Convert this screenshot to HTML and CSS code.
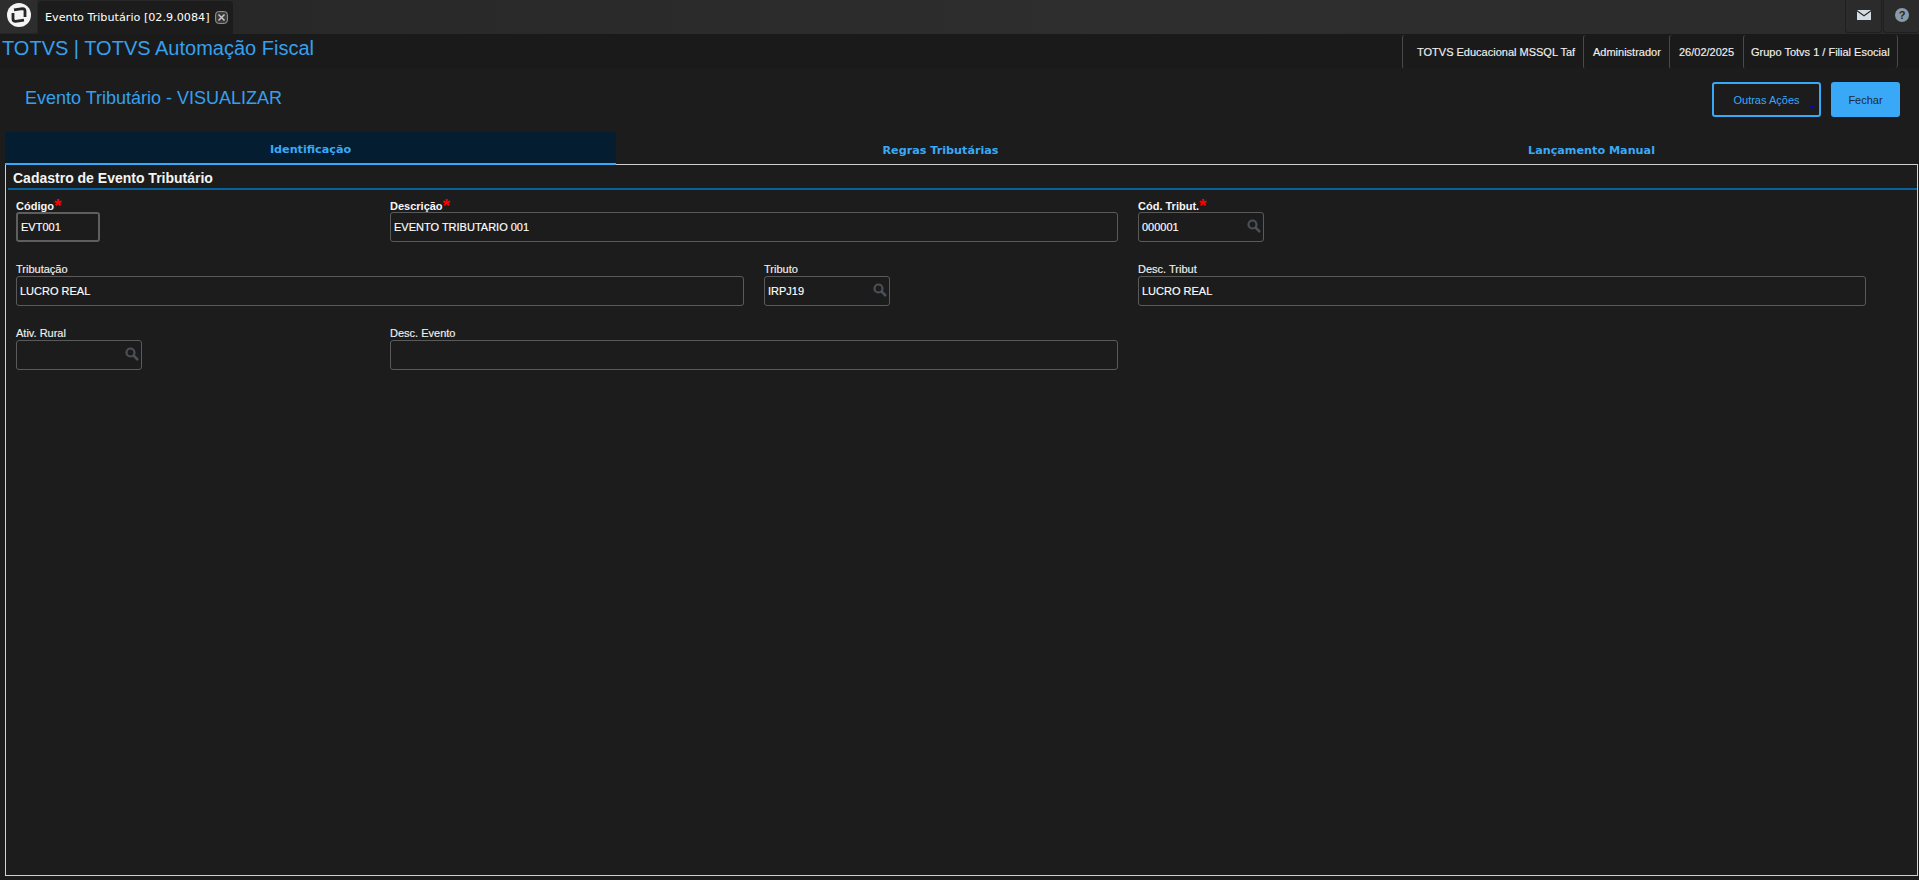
FILE: index.html
```html
<!DOCTYPE html>
<html lang="pt-BR">
<head>
<meta charset="utf-8">
<title>Evento Tributário</title>
<link rel="stylesheet" href="styles.css">
</head>
<body>
<div class="topbar">
  <div class="logo-cell">
    <svg class="logo" viewBox="0 0 24 24" width="24" height="24"><circle cx="12" cy="12" r="12" fill="#f4f4f4"/><path d="M7 6.800 L15.500 5.600 Q18 5.600 18 8 V14" fill="none" stroke="#262626" stroke-width="2.800"/><path d="M17 17.200 L8.500 18.400 Q6 18.400 6 16 V10" fill="none" stroke="#262626" stroke-width="2.800"/></svg>
  </div>
  <div class="doc-tab">
    <span class="doc-tab-title">Evento Tributário [02.9.0084]</span>
    <svg class="doc-tab-close" viewBox="0 0 13 13" width="13" height="13"><rect x="0.600" y="0.600" width="11.800" height="11.800" rx="3" fill="#3a3a3a" stroke="#9a9a9a"/><path d="M3.500 3.500 L9.500 9.500 M9.500 3.500 L3.500 9.500" stroke="#c8c8c8" stroke-width="1.500"/></svg>
  </div>
  <div class="top-spacer"></div>
  <div class="icon-cell">
    <svg viewBox="0 0 14 10" width="14" height="10"><path d="M0 0 H14 L7 5 Z M0 1.500 L7 6.500 L14 1.500 V10 H0 Z" fill="#d4dde3"/></svg>
  </div>
  <div class="icon-cell">
    <svg viewBox="0 0 14 14" width="14" height="14"><circle cx="7" cy="7" r="7" fill="#8a9ba8"/><text class="help-mark" x="7" y="11" text-anchor="middle">?</text></svg>
  </div>
</div>

<header class="appbar">
  <div class="app-title">TOTVS | TOTVS Automação Fiscal</div>
  <ul class="status">
    <li class="status-item status-first">TOTVS Educacional MSSQL Taf</li>
    <li class="status-item status-user">Administrador</li>
    <li class="status-item status-date">26/02/2025</li>
    <li class="status-item status-branch">Grupo Totvs 1 / Filial Esocial</li>
  </ul>
</header>

<main class="page">
  <div class="page-head">
    <h1 class="page-title">Evento Tributário - VISUALIZAR</h1>
    <div class="actions">
      <button class="btn btn-outline">Outras Ações<span class="caret"></span></button>
      <button class="btn btn-solid">Fechar</button>
    </div>
  </div>

  <nav class="tabs">
    <div class="tab tab-active">Identificação</div>
    <div class="tab">Regras Tributárias</div>
    <div class="tab">Lançamento Manual</div>
  </nav>

  <section class="panel">
    <h2 class="section-title">Cadastro de Evento Tributário</h2>
    <div class="form">
      <div class="field"><label class="label label-strong">Código<span class="req">*</span></label><div class="input input-focus w-code">EVT001</div></div>
      <div class="field span-2"><label class="label label-strong">Descrição<span class="req">*</span></label><div class="input">EVENTO TRIBUTARIO 001</div></div>
      <div class="field"><label class="label label-strong">Cód. Tribut.<span class="req">*</span></label><div class="input w-look">000001<svg class="lens" viewBox="0 0 14 14"><circle cx="5.500" cy="5.500" r="4" fill="none" stroke="#4a5058" stroke-width="2.200"/><path d="M8.500 8.500 L13 13" stroke="#4a5058" stroke-width="2.500"/></svg></div></div>
      <div class="field field-end"></div>

      <div class="field span-2"><label class="label">Tributação</label><div class="input">LUCRO REAL</div></div>
      <div class="field"><label class="label">Tributo</label><div class="input w-look">IRPJ19<svg class="lens" viewBox="0 0 14 14"><circle cx="5.500" cy="5.500" r="4" fill="none" stroke="#4a5058" stroke-width="2.200"/><path d="M8.500 8.500 L13 13" stroke="#4a5058" stroke-width="2.500"/></svg></div></div>
      <div class="field span-2"><label class="label">Desc. Tribut</label><div class="input">LUCRO REAL</div></div>

      <div class="field"><label class="label">Ativ. Rural</label><div class="input w-look"><svg class="lens" viewBox="0 0 14 14"><circle cx="5.500" cy="5.500" r="4" fill="none" stroke="#4a5058" stroke-width="2.200"/><path d="M8.500 8.500 L13 13" stroke="#4a5058" stroke-width="2.500"/></svg></div></div>
      <div class="field span-2"><label class="label">Desc. Evento</label><div class="input"></div></div>
    </div>
  </section>
</main>
</body>
</html>
```
FILE: styles.css
```css
* { box-sizing: border-box; }
html, body { margin: 0; padding: 0; height: 100%; }
body {
  width: 1919px;
  height: 880px;
  overflow: hidden;
  background: #1c1c1c;
  color: #f0f0f0;
  font-family: "Liberation Sans", Arial, sans-serif;
  display: flex;
  flex-direction: column;
}

.topbar {
  height: 34px;
  flex: none;
  display: flex;
  background: linear-gradient(90deg, #262626, #2e2e2e 60%, #2b2b2b);
}
.logo-cell {
  width: 37px;
  height: 33px;
  display: flex;
  align-items: center;
  justify-content: center;
  padding-bottom: 3px;
  background: #2d2d2d;
  border-radius: 0 0 4px 0;
}
.doc-tab {
  width: 195px;
  height: 33px;
  display: flex;
  align-items: center;
  padding-left: 7px;
  gap: 5px;
  background: #1c1c1c;
  border-radius: 4px 4px 0 0;
  margin: 1px 0 0 1px;
}
.doc-tab-title {
  font-family: "DejaVu Sans", sans-serif;
  font-size: 11.200px;
  color: #fff;
  white-space: nowrap;
}
.top-spacer { flex: 1; }
.icon-cell {
  width: 37px;
  height: 33px;
  display: flex;
  align-items: center;
  justify-content: center;
  padding-bottom: 3px;
  border: 1px solid #1f1f1f;
  border-top: 0;
  border-radius: 0 0 3px 3px;
}
.icon-cell + .icon-cell { width: 36px; margin-left: 1px; border-right: 0; }
.help-mark { font: bold 11px "Liberation Sans", sans-serif; fill: #262626; }

.appbar {
  height: 34px;
  flex: none;
  display: flex;
  justify-content: space-between;
  background: #1a1a1a;
  border-top: 1px solid #1a1a1a;
}
.app-title {
  font-size: 20px;
  line-height: 27px;
  color: #35a0ee;
  padding-left: 2px;
}
.status {
  display: flex;
  list-style: none;
  margin: 0 21px 0 0;
  padding: 0;
  border-right: 1px solid #4a4a4a;
  border-radius: 3px;
}
.status-item {
  height: 34px;
  line-height: 35px;
  font-size: 11px;
  color: #f0f0f0;
  -webkit-text-stroke: 0.15px #f0f0f0;
  border-left: 1px solid #4a4a4a;
  border-radius: 3px 0 0 3px;
  white-space: nowrap;
}
.status-first { width: 181px; padding-left: 14px; }
.status-user { width: 86px; padding-left: 9px; }
.status-date { width: 74px; padding-left: 9px; }
.status-branch { width: 154px; padding-left: 7px; }

.page {
  flex: 1;
  display: flex;
  flex-direction: column;
  padding: 0 1px 4px 5px;
  min-height: 0;
  background: #1c1c1c;
}
.page-head {
  height: 64px;
  flex: none;
  display: flex;
  align-items: flex-start;
  justify-content: space-between;
  padding: 14px 18px 0 20px;
}
.page-title {
  margin: 6px 0 0;
  font-size: 18px;
  font-weight: 400;
  line-height: 20px;
  color: #35a0ee;
}
.actions { display: flex; gap: 10px; }
.btn {
  height: 35px;
  font-family: "Liberation Sans", sans-serif;
  font-size: 11px;
  border-radius: 3px;
  padding: 0;
  position: relative;
}
.btn-outline {
  width: 109px;
  background: transparent;
  border: 2px solid #39a9f7;
  color: #39a9f7;
}
.btn-solid {
  width: 69px;
  background: #39a9f7;
  border: 0;
  color: #1e2a33;
}
.caret {
  position: absolute;
  right: 3px;
  bottom: 6px;
  border-left: 4px solid transparent;
  border-right: 4px solid transparent;
  border-top: 4px solid #0a0ab0;
}

.tabs {
  position: relative;
  z-index: 1;
  height: 33px;
  flex: none;
  display: grid;
  grid-template-columns: 611px 649px 1fr;
  grid-template-rows: 33px;
}
.tab {
  height: 33px;
  font-family: "DejaVu Sans", sans-serif;
  font-size: 11.200px;
  font-weight: 700;
  color: #39a9f7;
  text-align: center;
  line-height: 15px;
  padding-top: 11px;
}
.tab-active {
  background: #041d30;
  border-bottom: 2px solid #39a9f7;
  padding-top: 10px;
}

.panel {
  flex: 1;
  margin-top: -1px;
  border: 1px solid #d0d0d0;
  padding: 0 0 0 2px;
  min-height: 0;
}
.section-title {
  margin: 0;
  height: 25px;
  padding: 5px 0 0 5px;
  font-size: 14px;
  line-height: 16px;
  font-weight: 700;
  color: #f4f4f4;
  border-bottom: 2px solid #06639f;
}
.form {
  display: grid;
  grid-template-columns: repeat(5, 374px);
  grid-auto-rows: 64px;
  padding: 8px 0 0 8px;
}
.field { padding-right: 20px; }
.span-2 { grid-column: span 2; }
.field-end { grid-column: span 1; }
.label {
  display: block;
  height: 14px;
  font-size: 11px;
  line-height: 15px;
  color: #f0f0f0;
  -webkit-text-stroke: 0.15px #f0f0f0;
}
.label-strong { font-weight: 700; color: #f6f6f6; line-height: 17px; -webkit-text-stroke: 0; }
.req {
  color: #f00;
  font-size: 19px;
  font-weight: 700;
  line-height: 10px;
  margin-left: 0;
  vertical-align: -2px;
}
.input {
  position: relative;
  height: 30px;
  border: 1px solid #5a5a5a;
  border-radius: 3px;
  font-size: 11px;
  line-height: 28px;
  padding-left: 3px;
  color: #fff;
  -webkit-text-stroke: 0.15px #fff;
}
.input-focus { border: 2px solid #5e5e5e; line-height: 26px; padding-left: 3px; }
.w-code { width: 84px; }
.w-look { width: 126px; }
.lens {
  position: absolute;
  right: 2px;
  top: 6px;
  width: 14px;
  height: 14px;
}
```
